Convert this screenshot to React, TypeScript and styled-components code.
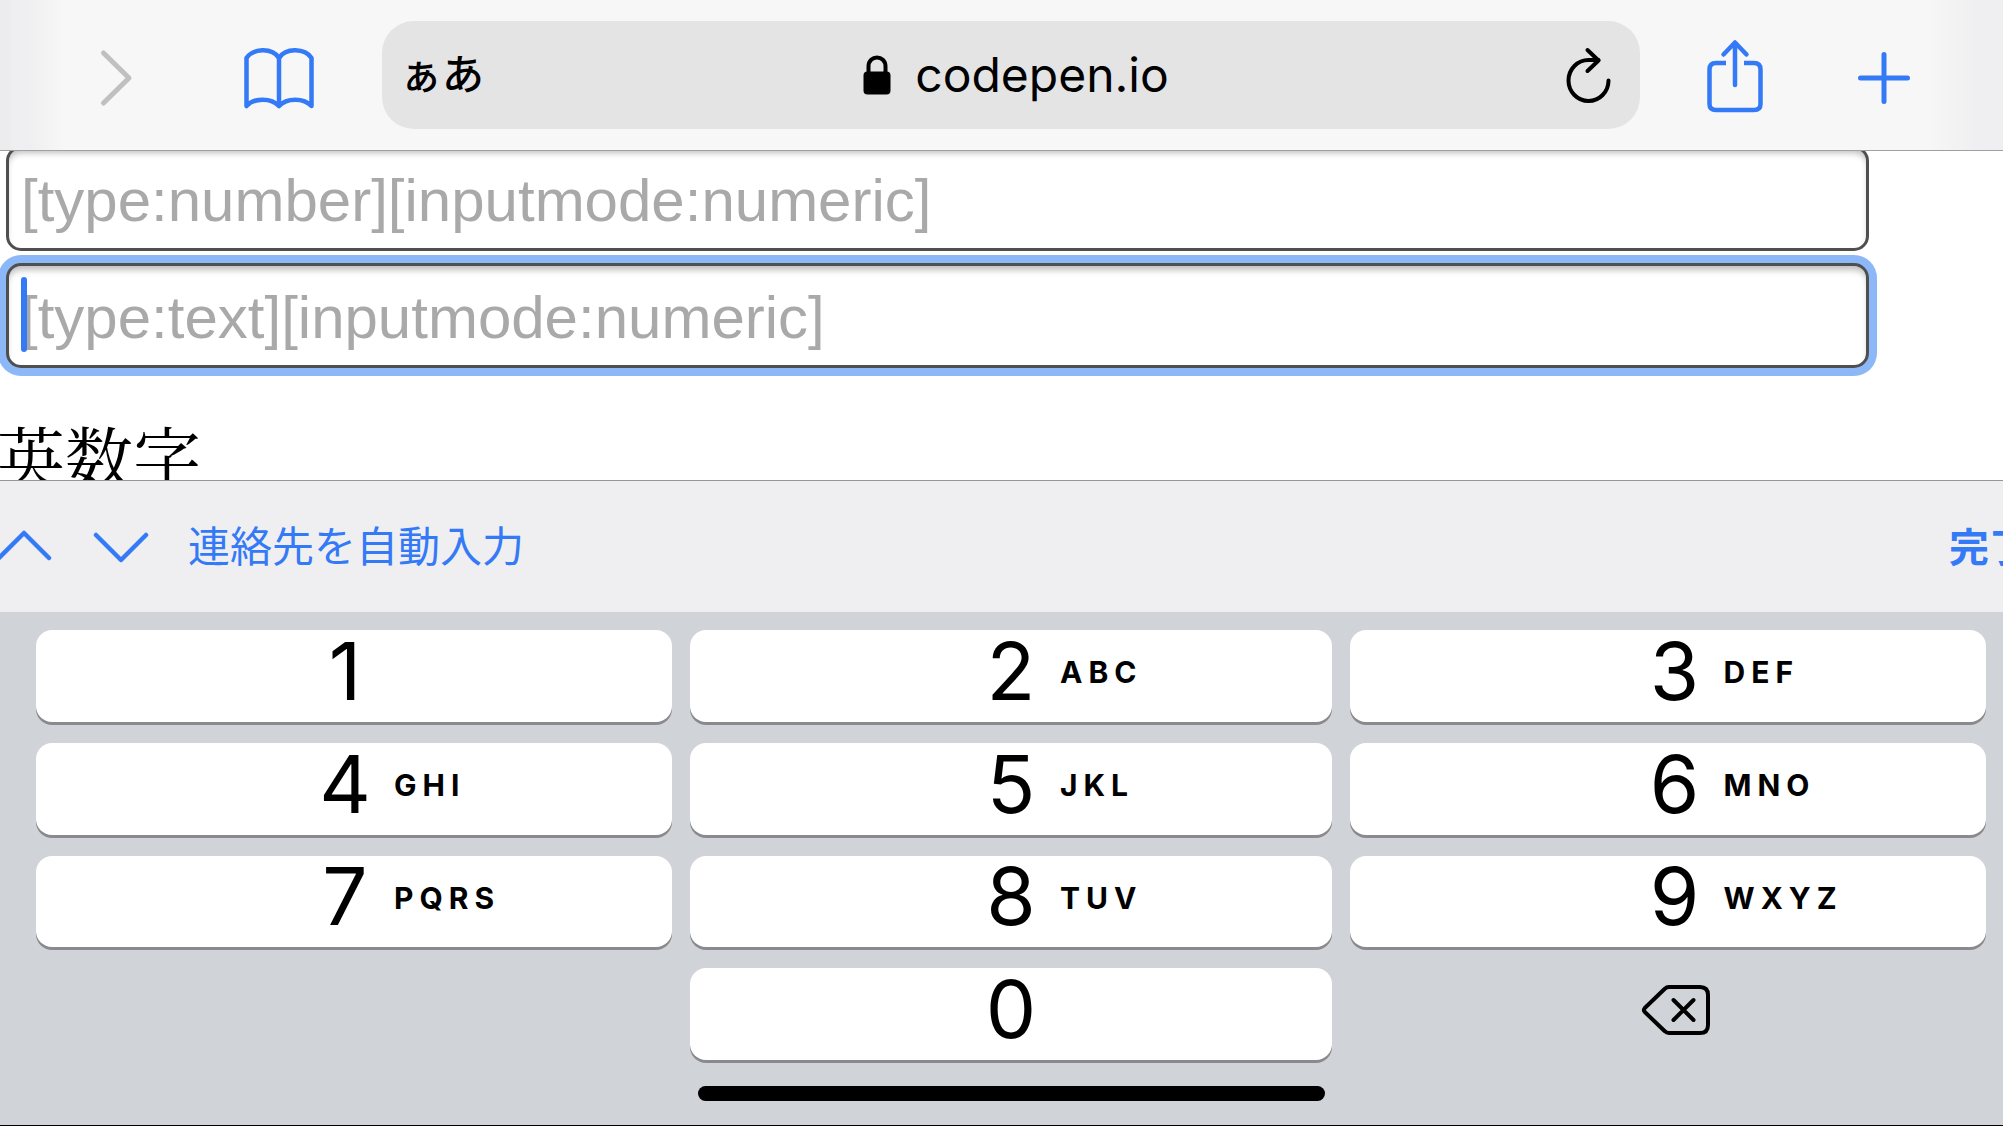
import React from "react";
import styled, { createGlobalStyle } from "styled-components";

const BLUE = "#347af7";
const UI_FONT = `Inter, "Noto Sans CJK JP", sans-serif`;

const GlobalStyle = createGlobalStyle`
  *, *::before, *::after { box-sizing: border-box; }
  body { margin: 0; background: #fff; }
  button { margin: 0; padding: 0; border: 0; background: none; font: inherit; color: inherit; cursor: pointer; }
  svg { display: block; }
`;

const Screen = styled.div`
  display: flex;
  flex-direction: column;
  height: 100vh;
  overflow: hidden;
  border-bottom: 1px solid #000;
  font-family: ${UI_FONT};
`;

const Toolbar = styled.header`
  display: flex;
  align-items: center;
  flex: none;
  padding: 21px 92px 21px 99px;
  border-bottom: 1px solid #a0a0a0;
  background: linear-gradient(
    to right,
    #ececec 0,
    #ececec 8px,
    #efeff1 12px,
    #efeff1 28px,
    #f7f7f7 64px,
    #f7f7f7 calc(100% - 76px),
    #efeff1 calc(100% - 24px),
    #efeff1 100%
  );
`;

const ToolButton = styled.button<{ $color?: string; $space?: number }>`
  flex: none;
  padding-top: 6px;
  color: ${(p) => p.$color ?? BLUE};
  margin-left: ${(p) => p.$space ?? 0}px;
`;

const AddressField = styled.div`
  flex: 1;
  display: grid;
  grid-template-columns: 1fr auto 1fr;
  align-items: center;
  height: 108px;
  margin: 0 66px 0 68px;
  padding: 0 28px 0 18px;
  border-radius: 32px;
  background: #e4e4e4;
  color: #000;
`;

const ReaderButton = styled.button`
  justify-self: start;
  font-size: 42px;
  line-height: 48px;
  font-weight: 500;
`;

const Address = styled.button`
  display: flex;
  align-items: center;
  gap: 24px;
  padding-left: 20px;
  font-size: 48px;
  line-height: 60px;
`;

const ReloadButton = styled.button`
  justify-self: end;
`;

const WebView = styled.main`
  flex: 1 1 0;
  min-height: 0;
  overflow: hidden;
  background: #fff;
`;

const Form = styled.form`
  display: flex;
  flex-direction: column;
  gap: 12px;
  width: 93%;
  margin: -5px 0 0 6px;
`;

const Field = styled.label`
  position: relative;
  display: block;
`;

const TextInput = styled.input<{ $focused?: boolean }>`
  display: block;
  width: 100%;
  height: 105px;
  padding: 3px 12px 0;
  border: 3px solid #4f4f4f;
  border-radius: 15px;
  outline: none;
  background: #fff;
  box-shadow: inset 0 6px 6px -2px rgba(0, 0, 0, 0.26)
    ${(p) => (p.$focused ? ", 0 0 0 8px #8cb8f8" : "")};
  font-family: "Liberation Sans", Arial, sans-serif;
  font-size: 60px;
  appearance: textfield;

  &::placeholder {
    color: #a9a9a9;
    opacity: 1;
  }
`;

const Caret = styled.span`
  position: absolute;
  top: 14px;
  left: 15px;
  width: 6px;
  height: 75px;
  border-radius: 3px;
  background: ${BLUE};
`;

const Heading = styled.h2`
  margin: 43px 0 0 -3px;
  font-family: "Liberation Serif", "Noto Serif CJK JP", "Noto Sans CJK JP", serif;
  font-size: 68px;
  line-height: 100px;
  font-weight: 400;
  color: #000;
`;

const AccessoryBar = styled.div`
  display: flex;
  align-items: center;
  flex: none;
  height: 132px;
  border-top: 1px solid #979797;
  background: #efeff1;
  color: ${BLUE};
  font-size: 42px;
  line-height: 60px;
  overflow: hidden;
`;

const StepButton = styled.button<{ $space: number }>`
  flex: none;
  margin-left: ${(p) => p.$space}px;
`;

const AutofillButton = styled.button`
  margin-left: 39px;
  font-weight: 400;
  white-space: nowrap;
`;

const DoneButton = styled.button`
  margin: 2px -26px 0 auto;
  font-weight: 700;
  font-size: 40px;
  white-space: nowrap;
`;

const Keyboard = styled.section`
  flex: none;
  padding: 18px 17px 24px 36px;
  background: #d0d3d8;
`;

const KeyGrid = styled.div`
  display: grid;
  grid-template-columns: 106fr 107fr 106fr;
  grid-template-rows: repeat(4, 1fr);
  height: 430px;
  column-gap: 18px;
  row-gap: 21px;
`;

const KEY_PADDING = ["0 18px 10px 0", "0 0 10px 0", "0 0 10px 13px"];

const Key = styled.button<{ $column: number }>`
  grid-column: ${(p) => p.$column + 1};
  display: grid;
  grid-template-columns: 1fr 50px 1fr;
  align-items: center;
  column-gap: 24px;
  padding: ${(p) => KEY_PADDING[p.$column]};
  border-radius: 16px;
  background: #fff;
  box-shadow: 0 3px 0 #8a898e;
  color: #000;
`;

const Digit = styled.span`
  grid-column: 2;
  justify-self: center;
  font-size: 80px;
  line-height: 80px;
`;

const Letters = styled.span`
  grid-column: 3;
  justify-self: start;
  padding-top: 3px;
  font-size: 30px;
  line-height: 36px;
  font-weight: 700;
  letter-spacing: 6px;
`;

const DeleteKey = styled.button`
  grid-column: 3;
  display: flex;
  align-items: center;
  justify-content: center;
  padding: 0 0 8px 16px;
  color: #000;
`;

const HomeIndicator = styled.div`
  width: 627px;
  max-width: 100%;
  height: 15px;
  margin: 26px auto 0;
  border-radius: 8px;
  background: #000;
`;

const keys: { digit: string; letters?: string; column: number }[] = [
  { digit: "1", column: 0 },
  { digit: "2", letters: "ABC", column: 1 },
  { digit: "3", letters: "DEF", column: 2 },
  { digit: "4", letters: "GHI", column: 0 },
  { digit: "5", letters: "JKL", column: 1 },
  { digit: "6", letters: "MNO", column: 2 },
  { digit: "7", letters: "PQRS", column: 0 },
  { digit: "8", letters: "TUV", column: 1 },
  { digit: "9", letters: "WXYZ", column: 2 },
  { digit: "0", column: 1 },
];

const line = {
  fill: "none",
  stroke: "currentColor",
  strokeLinecap: "round" as const,
  strokeLinejoin: "round" as const,
};

const ForwardIcon = () => (
  <svg width="34" height="60" viewBox="0 0 34 60" {...line} strokeWidth="5">
    <path d="M4.500 5L30 30L4.500 55" />
  </svg>
);

const BookIcon = () => (
  <svg width="70" height="62" viewBox="0 0 70 62" {...line} strokeWidth="4.500">
    <path d="M2.500 59V11C9 1.300 28 .300 35 11C42 .300 61 1.300 67.500 11V59C60 50.500 42.500 50.500 35 59C27.500 50.500 10 50.500 2.500 59Z" />
    <path d="M35 11V58.500" />
  </svg>
);

const LockIcon = () => (
  <svg width="28" height="40" viewBox="0 0 28 40">
    <path d="M5.500 18V11.500C5.500 -.500 22.500 -.500 22.500 11.500V18" fill="none" stroke="#000" strokeWidth="4" />
    <rect x="0.500" y="16.500" width="27" height="23" rx="4" fill="#000" />
  </svg>
);

const ReloadIcon = () => (
  <svg width="46" height="56" viewBox="0 0 46 56" {...line} strokeWidth="4">
    <path d="M42.500 33.500A20 20.500 0 1 1 22.500 13H32.500" />
    <path d="M21.500 3L32.500 13.500L21.500 24" />
  </svg>
);

const ShareIcon = () => (
  <svg width="58" height="78" viewBox="0 0 58 78" {...line} strokeWidth="4.500">
    <path d="M20 24H10Q3.500 24 3.500 30.500V65Q3.500 71 10 71H48Q54.500 71 54.500 65V30.500Q54.500 24 48 24H38" strokeLinecap="butt" />
    <path d="M29 46V4M17.500 15.500L29 3.500L40.500 15.500" />
  </svg>
);

const PlusIcon = () => (
  <svg width="54" height="54" viewBox="0 0 54 54" {...line} strokeWidth="5">
    <path d="M27 3.500V50.500M3.500 27H50.500" />
  </svg>
);

const ArrowIcon = ({ up }: { up?: boolean }) => (
  <svg width="56" height="34" viewBox="0 0 56 34" {...line} strokeWidth="4.500">
    <path d={up ? "M3 28L28 3L53 28" : "M3 5L28 30L53 5"} />
  </svg>
);

const DeleteIcon = () => (
  <svg width="70" height="52" viewBox="0 0 70 52" {...line} strokeWidth="4">
    <path d="M28 3H59Q67 3 67 11V41Q67 49 59 49H28Q25.500 49 23.800 47.200L3.800 28Q2 26 3.800 24L23.800 4.800Q25.500 3 28 3Z" />
    <path d="M32.500 16L52.500 36M52.500 16L32.500 36" />
  </svg>
);

export default function App() {
  return (
    <Screen>
      <GlobalStyle />
      <Toolbar>
        <ToolButton type="button" aria-label="Forward" $color="#c0c0c0">
          <ForwardIcon />
        </ToolButton>
        <ToolButton type="button" aria-label="Bookmarks" $space={111}>
          <BookIcon />
        </ToolButton>
        <AddressField>
          <ReaderButton type="button">ぁあ</ReaderButton>
          <Address type="button">
            <LockIcon />
            <span>codepen.io</span>
          </Address>
          <ReloadButton type="button" aria-label="Reload">
            <ReloadIcon />
          </ReloadButton>
        </AddressField>
        <ToolButton type="button" aria-label="Share">
          <ShareIcon />
        </ToolButton>
        <ToolButton type="button" aria-label="New tab" $space={93}>
          <PlusIcon />
        </ToolButton>
      </Toolbar>

      <WebView>
        <Form>
          <Field>
            <TextInput
              type="number"
              inputMode="numeric"
              aria-label="[type:number][inputmode:numeric]"
              placeholder="[type:number][inputmode:numeric]"
            />
          </Field>
          <Field>
            <TextInput
              $focused
              type="text"
              inputMode="numeric"
              aria-label="[type:text][inputmode:numeric]"
              placeholder="[type:text][inputmode:numeric]"
            />
            <Caret />
          </Field>
        </Form>
        <Heading>英数字</Heading>
      </WebView>

      <AccessoryBar>
        <StepButton type="button" aria-label="Previous field" $space={-4}>
          <ArrowIcon up />
        </StepButton>
        <StepButton type="button" aria-label="Next field" $space={41}>
          <ArrowIcon />
        </StepButton>
        <AutofillButton type="button">連絡先を自動入力</AutofillButton>
        <DoneButton type="button">完了</DoneButton>
      </AccessoryBar>

      <Keyboard>
        <KeyGrid>
          {keys.map((key) => (
            <Key key={key.digit} type="button" $column={key.column}>
              <Digit>{key.digit}</Digit>
              {key.letters && <Letters>{key.letters}</Letters>}
            </Key>
          ))}
          <DeleteKey type="button" aria-label="Delete">
            <DeleteIcon />
          </DeleteKey>
        </KeyGrid>
        <HomeIndicator />
      </Keyboard>
    </Screen>
  );
}
